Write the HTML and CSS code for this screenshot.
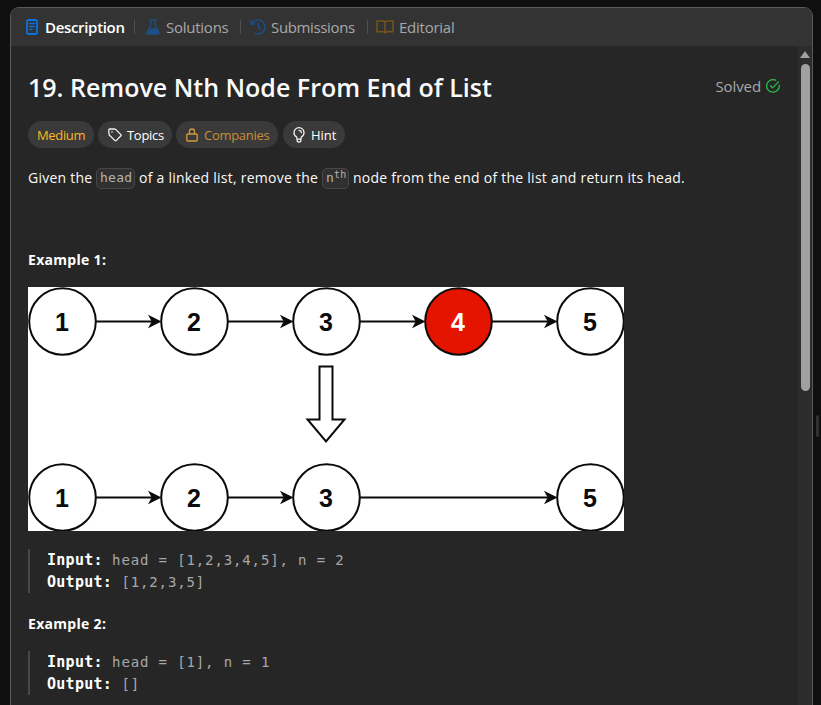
FILE: index.html
```
<!DOCTYPE html>
<html lang="en">
<head>
<meta charset="utf-8">
<title>Remove Nth Node From End of List</title>
<link rel="stylesheet" href="styles.css">
</head>
<body>
<div class="panel">
  <nav class="tabs">
    <div class="tab tab-description active">
      <svg width="12" height="16" viewBox="0 0 12 16" fill="none" stroke="#0a72e0" stroke-width="1.8" stroke-linecap="round"><rect x="1" y="1" width="10" height="14" rx="1.5"/><path d="M3.5 4.5h5M3.5 7.5h5M3.5 10.500h2.500" stroke-width="1.3"/></svg>
      <span>Description</span>
    </div>
    <i class="sep"></i>
    <div class="tab tab-solutions">
      <svg width="14" height="16" viewBox="0 0 14 16" fill="none" stroke="#1c4f86" stroke-width="1.4" stroke-linejoin="round"><path d="M3.5 1h7M4.9 1v5.2L1 13.3Q.4 15 2.2 15h9.6q1.800 0 1.200-1.700L9.100 6.200V1"/><path d="M3 9.500h8l2.200 4.500-1 1H2l-1-1z" fill="#1c4f86" stroke="none"/></svg>
      <span>Solutions</span>
    </div>
    <i class="sep"></i>
    <div class="tab tab-submissions">
      <svg width="16" height="16" viewBox="0 0 16 16" fill="none" stroke="#1c4f86" stroke-width="1.5" stroke-linecap="round" stroke-linejoin="round"><path d="M1.600 5A7 7 0 1 1 5 14.300M.800 1.800l.500 3.500 3.500-.300M8.400 4.600v3.700l2.200 2"/></svg>
      <span>Submissions</span>
    </div>
    <i class="sep"></i>
    <div class="tab tab-editorial">
      <svg width="18" height="14" viewBox="0 0 18 14" fill="none" stroke="#76561a" stroke-width="1.500" stroke-linejoin="round"><path d="M9 2.500Q8.500 1 7 1H1v10.800h6q1.500 0 2 1.200.500-1.200 2-1.200h6V1h-6Q9.500 1 9 2.500V13"/></svg>
      <span>Editorial</span>
    </div>
  </nav>
  <div class="body">
    <main class="content">
      <header class="heading">
        <h1><span>19. Remove Nth Node From End of List</span></h1>
        <div class="solved"><span>Solved</span>
          <svg width="14" height="14" viewBox="0 0 14 14" fill="none" stroke="#2cbb49" stroke-width="1.300" stroke-linecap="round" stroke-linejoin="round"><path d="M9.600 1.200A6.300 6.300 0 1 0 13.200 6.200M4.500 6.800l2.100 2.100 5.800-6"/></svg>
        </div>
      </header>
      <div class="tags">
        <div class="tag medium"><span>Medium</span></div>
        <div class="tag topics">
          <svg width="14" height="14" viewBox="0 0 14 14" fill="none" stroke="#f2f2f2" stroke-width="1.300" stroke-linejoin="round"><path d="M.800 1.700Q.800.800 1.700.800L6.700 1q.500 0 .900.400l5.300 5.200q.600.600 0 1.200l-4.700 4.800q-.600.600-1.200 0L1.500 7.300Q1 6.900 1 6.300z"/><circle cx="4" cy="4" r=".8" fill="#f2f2f2" stroke="none"/></svg>
          <span>Topics</span></div>
        <div class="tag companies">
          <svg width="12" height="14" viewBox="0 0 12 14" fill="none" stroke="#d49a3e" stroke-width="1.300"><rect x=".8" y="6" width="10.400" height="7" rx="1"/><path d="M3.500 6V3.500a2.500 2.500 0 0 1 5 0V6"/></svg>
          <span>Companies</span></div>
        <div class="tag hint">
          <svg width="12" height="16" viewBox="0 0 12 16" fill="none" stroke="#f2f2f2" stroke-width="1.300" stroke-linecap="round" stroke-linejoin="round"><path d="M4 12.200 3.700 10Q1 8.500 1 5.700a5 5 0 0 1 10 0Q11 8.500 8.300 10L8 12.200zM4.300 14.500q1.700 1 3.400 0M4 12.200l.3 2.300M8 12.200l-.3 2.300M6 3.300q2.200.2 2.400 2.400"/></svg>
          <span>Hint</span></div>
      </div>
      <p class="statement"><span class="s1">Given the</span><code class="c1">head</code><span class="s2">of a linked list, remove the</span><code class="c2">n<sup>th</sup></code><span class="s3">node from the end of the list and return its head.</span></p>
      <h2 class="ex1"><span>Example 1:</span></h2>
      <svg class="figure" width="596" height="244" viewBox="0 0 596 244">
        <rect width="596" height="244" fill="#fff"/>
        <g fill="none" stroke="#0b0b0b" stroke-width="2">
          <circle cx="34.500" cy="34.500" r="33.300"/><circle cx="166.500" cy="34.500" r="33.300"/><circle cx="298.500" cy="34.500" r="33.300"/><circle cx="430.500" cy="34.500" r="33.300" fill="#e51400"/><circle cx="562.500" cy="34.500" r="33.300"/>
          <circle cx="34.500" cy="210.500" r="33.300"/><circle cx="166.500" cy="210.500" r="33.300"/><circle cx="298.500" cy="210.500" r="33.300"/><circle cx="562.500" cy="210.500" r="33.300"/>
          <path d="M68 34.500h56M200 34.500h56M332 34.500h56M464 34.500h56M68 210.500h56M200 210.500h56M332 210.500h188"/>
          <path d="M291.500 79.500h13v53h12L298 154.500l-18.500-22h12z"/>
        </g>
        <g fill="#0b0b0b">
          <path id="tip" d="M133.500 34.500l-13.500-6.700 3.700 6.700-3.700 6.700z"/>
          <use href="#tip" x="132"/><use href="#tip" x="264"/><use href="#tip" x="396"/>
          <use href="#tip" y="176"/><use href="#tip" x="132" y="176"/><use href="#tip" x="396" y="176"/>
        </g>
        <g class="num">
          <text x="34" y="43.500">1</text><text x="166" y="43.500">2</text><text x="298" y="43.500">3</text><text x="430" y="43.500" fill="#fff">4</text><text x="562" y="43.500">5</text>
          <text x="34" y="219.500">1</text><text x="166" y="219.500">2</text><text x="298" y="219.500">3</text><text x="562" y="219.500">5</text>
        </g>
      </svg>
      <pre class="io"><b>Input:</b> head = [1,2,3,4,5], n = 2
<b>Output:</b> [1,2,3,5]</pre>
      <h2 class="ex2"><span>Example 2:</span></h2>
      <pre class="io"><b>Input:</b> head = [1], n = 1
<b>Output:</b> []</pre>
    </main>
    <div class="scrollbar"><i class="up"></i><i class="thumb"></i></div>
  </div>
</div>
<div class="gutter"><i></i></div>
</body>
</html>
```
FILE: styles.css
```
* { box-sizing: border-box; }
body {
  margin: 0;
  width: 821px;
  height: 705px;
  overflow: hidden;
  display: flex;
  background: #0f0f0f;
  color: #fafafa;
  font-family: "Open Sans", "Noto Sans", sans-serif;
  font-size: 14px;
}
svg { display: block; flex: none; }
span { white-space: nowrap; }
.panel {
  margin: 7px 0 0 10px;
  width: 803px;
  height: 710px;
  flex: none;
  border: 1px solid #5a5a5a;
  border-radius: 9px;
  overflow: hidden;
  background: #262626;
}
.tabs {
  height: 38px;
  display: flex;
  align-items: center;
  background: #333;
  color: #a8a8a8;
  font-size: 15px;
}
.tab { display: flex; align-items: center; flex: none; height: 38px; letter-spacing: -.25px; }
.tab-description { width: 108px; margin-left: 15px; gap: 7px; }
.tab-solutions { width: 94px; gap: 6px; }
.tab-submissions { width: 117px; gap: 5px; }
.tab-submissions span { letter-spacing: -.35px; }
.tab-editorial { gap: 5px; }
.active { color: #fff; font-weight: 600; }
.tab-description span { letter-spacing: -.32px; }
.sep { width: 1px; height: 14px; background: #505050; flex: none; margin-right: 11px; }
.sep + .tab-submissions { margin-left: -2px; }
.sep + .tab-editorial { margin-left: -3px; }
.body { display: flex; height: 671px; }
.content { width: 787px; padding: 0 18px 0 17px; }
.heading { display: flex; justify-content: space-between; height: 75px; padding-top: 24px; }
h1 { margin: 0; font-size: 25px; line-height: 34px; font-weight: 600; }
.solved { display: flex; align-items: center; gap: 5px; height: 32px; color: #a8a8a8; font-size: 15px; letter-spacing: -.1px; }
.tags { display: flex; gap: 4px; height: 27px; }
.tag { display: flex; align-items: center; height: 27px; border-radius: 14px; background: #3a3a3a; padding-left: 9px; font-size: 13px; flex: none; }
.medium { width: 66px; color: #ffb822; letter-spacing: -.35px; }
.topics { width: 74px; gap: 5px; padding-left: 10px; letter-spacing: -.3px; }
.companies { width: 102px; gap: 6px; padding-left: 10px; margin-right: 1px; color: #c98f35; letter-spacing: -.3px; }
.hint { width: 62px; gap: 6px; padding-left: 10px; }
.topics, .hint { color: #fff; }
.statement { margin: 19px 0 0; height: 22px; display: flex; align-items: center; line-height: 22px; letter-spacing: .25px; }
.statement > span { flex: none; }
.s1 { width: 68px; }
.s2 { width: 183px; }
code { height: 21px; line-height: 18px; border: 1px solid #474747; border-radius: 5px; background: #303030; color: #b3b3b3; font-family: "DejaVu Sans Mono", monospace; font-size: 13px; padding: 0 3px; flex: none; }
.c1 { width: 39px; margin-right: 4px; }
.c2 { width: 27px; margin-right: 4px; }
sup { font-size: 10px; line-height: 0; vertical-align: 4px; }
h2 { margin: 0; font-size: 14px; line-height: 20px; font-weight: 700; color: #fff; letter-spacing: .3px; }
.ex1 { margin-top: 61px; }
.figure { margin-top: 17px; }
.num { font: bold 25px "Liberation Sans", Arial, sans-serif; text-anchor: middle; fill: #0b0b0b; }
.io { margin: 18px 0 0; height: 44px; border-left: 2px solid #474747; padding-left: 17px; font: 14px/22px "DejaVu Sans Mono", monospace; letter-spacing: .87px; color: #a8a8a8; }
.io b { color: #fff; font-size: 15px; line-height: 20px; letter-spacing: .27px; }
.ex2 { margin-top: 21px; }
.ex2 + .io { margin-top: 17px; }
.scrollbar { width: 14px; background: #2c2c2c; display: flex; flex-direction: column; align-items: center; padding-top: 5px; }
.up { border: 5px solid transparent; border-top: 0; border-bottom: 7px solid #a0a0a0; }
.thumb { width: 9px; height: 327px; border-radius: 5px; background: #a0a0a0; margin-top: 6px; }
.gutter { padding: 415px 0 0 3px; }
.gutter i { display: block; width: 3px; height: 22px; border-radius: 2px; background: #303030; }
```
